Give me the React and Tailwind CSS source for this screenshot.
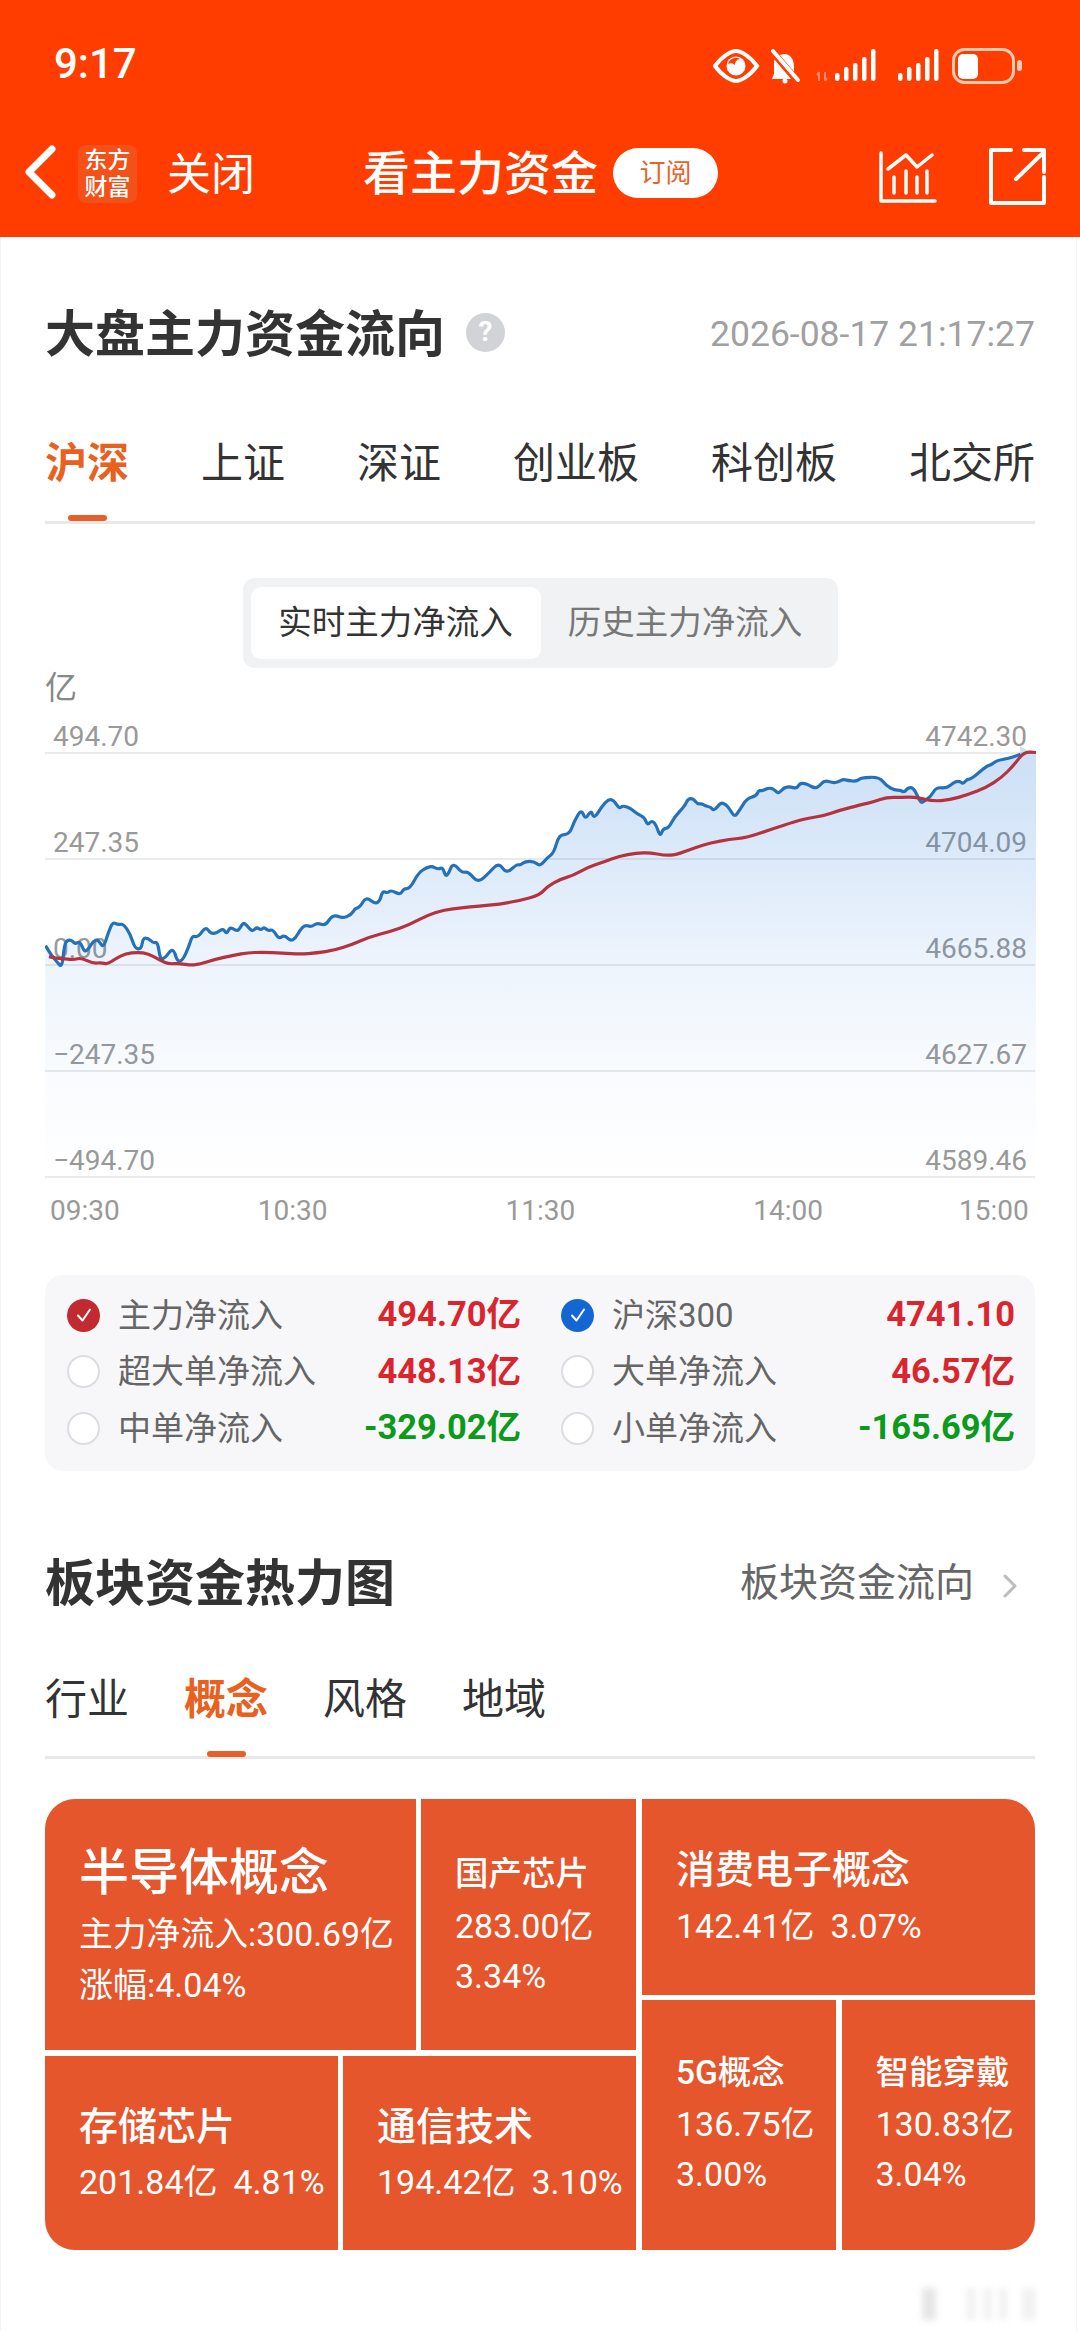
import React from "react";

// traced from the chart, x/y are in px inside the 990x472 plot box
const left = (X, Y) => [X / 2.903 - 45, 660 + Y / 2.703 - 706];
const right = (X, Y) => [540 + X / 2.903 - 45, 660 + Y / 2.703 - 706];

const blueLeft = [[132,772],[150,800],[165,815],[180,832],[187,770],[195,757],[208,757],[218,768],[232,760],[245,790],[258,780],[270,760],[285,755],[300,780],[315,735],[328,708],[342,716],[358,713],[378,740],[392,780],[410,782],[415,752],[430,752],[445,765],[458,762],[465,810],[480,805],[495,785],[505,785],[515,815],[530,812],[548,775],[558,745],[575,750],[597,720],[612,740],[630,738],[648,725],[658,742],[668,720],[690,736],[705,710],[715,715],[732,735],[745,722],[757,730],[767,722],[778,732],[792,728],[810,755],[825,742],[850,765],[880,715],[905,722],[920,710],[945,718],[960,695],[975,690],[995,698],[1020,688],[1030,672],[1045,668],[1062,640],[1090,660],[1103,650],[1110,625],[1125,630],[1135,622],[1162,635],[1172,618],[1190,618],[1215,575],[1240,560],[1255,558],[1272,566],[1285,560],[1292,582],[1300,582],[1315,547],[1340,575],[1360,572],[1388,603],[1420,575],[1448,547],[1470,578],[1500,552],[1510,555],[1525,544],[1550,544]];
const blueRight = [[0,558],[20,535],[40,522],[55,472],[85,472],[100,435],[120,403],[132,432],[148,405],[157,430],[180,395],[200,376],[215,380],[230,402],[240,393],[265,402],[280,415],[303,425],[312,447],[325,433],[338,447],[348,478],[358,455],[373,455],[390,425],[420,395],[430,375],[445,375],[458,390],[470,388],[480,395],[495,397],[505,408],[525,385],[540,390],[552,405],[565,425],[580,405],[600,375],[628,367],[635,352],[645,354],[665,345],[680,350],[692,362],[708,345],[725,342],[745,348],[755,332],[775,335],[795,346],[808,344],[825,325],[850,332],[865,330],[880,322],[895,326],[920,328],[932,318],[985,316],[1005,340],[1030,352],[1045,352],[1058,358],[1068,345],[1085,345],[1105,387],[1115,382],[1135,368],[1150,344],[1180,347],[1205,328],[1220,328],[1228,335],[1240,322],[1252,322],[1295,288],[1310,283],[1325,272],[1360,266],[1395,255]];
const redLeft = [[142,802],[165,806],[190,808],[215,810],[235,805],[270,820],[295,818],[312,822],[335,808],[365,793],[400,790],[430,793],[465,812],[490,822],[520,820],[555,825],[580,822],[620,810],[680,798],[720,791],[760,790],[820,792],[870,795],[920,792],[970,785],[1020,770],[1075,748],[1135,733],[1190,715],[1240,690],[1290,675],[1340,670],[1390,665],[1450,660],[1510,650]];
const redRight = [[0,635],[20,613],[60,592],[95,583],[140,560],[185,546],[230,530],[280,522],[320,521],[360,528],[395,527],[450,507],[495,494],[550,485],[600,480],[680,455],[740,437],[780,427],[820,422],[870,406],[930,392],[970,383],[1005,371],[1050,371],[1090,370],[1140,382],[1190,378],[1240,365],[1295,345],[1340,318],[1375,285],[1405,248],[1440,250]];

// quadratic through midpoints so the traced lines don't look angular
const toPath = (a, b) => {
  const pts = [...a.map(([x, y]) => left(x, y)), ...b.map(([x, y]) => right(x, y))];
  let d = `M${pts[0][0].toFixed(1)} ${pts[0][1].toFixed(1)}`;
  for (let i = 1; i < pts.length - 1; i++) {
    const mx = (pts[i][0] + pts[i + 1][0]) / 2;
    const my = (pts[i][1] + pts[i + 1][1]) / 2;
    d += ` Q${pts[i][0].toFixed(1)} ${pts[i][1].toFixed(1)} ${mx.toFixed(1)} ${my.toFixed(1)}`;
  }
  const last = pts[pts.length - 1];
  return `${d} L${last[0].toFixed(1)} ${last[1].toFixed(1)}`;
};

const bluePath = toPath(blueLeft, blueRight);
const redPath = toPath(redLeft, redRight);
const areaPath = `${bluePath} L975 40 L985 46 L991 47 L991 472 L0 472 Z`;

const axis = [
  ["494.70", "4742.30", "h-[48px]"],
  ["247.35", "4704.09", "h-[106px]"],
  ["0.00", "4665.88", "h-[106px]"],
  ["−247.35", "4627.67", "h-[106px]"],
  ["−494.70", "4589.46", "h-[106px]"],
];

const legend = [
  { label: "主力净流入", value: "494.70亿", tone: "text-[#d9262e]", check: "bg-[#c22a32]" },
  { label: "沪深300", value: "4741.10", tone: "text-[#d9262e]", check: "bg-[#1467d2]" },
  { label: "超大单净流入", value: "448.13亿", tone: "text-[#d9262e]" },
  { label: "大单净流入", value: "46.57亿", tone: "text-[#d9262e]" },
  { label: "中单净流入", value: "-329.02亿", tone: "text-[#0c9a1c]" },
  { label: "小单净流入", value: "-165.69亿", tone: "text-[#0c9a1c]" },
];

const smudges = ["w-[14px] bg-[#e6e6e6]", "ml-[30px] w-[10px] bg-[#f3f3f3]", "ml-[8px] w-[8px] bg-[#f1f1f1]", "ml-[7px] w-[8px] bg-[#f1f1f1]", "ml-[15px] w-[14px] bg-[#f2f2f2]"];

function Tab({ children, active, className = "" }) {
  return (
    <div className={`flex flex-col items-center ${className}`}>
      <span className={`h-[60px] text-[42px] leading-[63px] ${active ? "font-bold text-[#e8611f]" : "text-[#333]"}`}>{children}</span>
      {active && <span className="mt-[23px] h-[6px] w-[39px] rounded-full bg-[#e5602a]" />}
    </div>
  );
}

function Check({ color }) {
  if (!color) return <span className="h-[33px] w-[33px] shrink-0 rounded-full border-2 border-[#dcdde0] bg-white" />;
  return (
    <span className={`flex h-[33px] w-[33px] shrink-0 items-center justify-center rounded-full ${color}`}>
      <svg width="20" height="20" viewBox="0 0 20 20" fill="none" stroke="#fff" strokeWidth="2" strokeLinecap="round" strokeLinejoin="round">
        <path d="M4 10.5l4.5 5L16 4.5" />
      </svg>
    </span>
  );
}

function StatusIcons() {
  return (
    <svg width="310" height="38" viewBox="0 0 310 38" className="mt-[8px] shrink-0">
      {/* eye */}
      <path d="M2 18 C10 7 19 3 23 3 C27 3 36 7 44 18 C36 29 27 33 23 33 C19 33 10 29 2 18 Z" fill="none" stroke="#fff" strokeWidth="4" />
      <circle cx="23" cy="18" r="9.5" fill="#fff" />
      <path d="M15 16 A8 8 0 0 1 27 11 C24 11 22 14 22 17 C20 15 17 15 15 16 Z" fill="#ff3d00" />
      {/* muted bell */}
      <path d="M72 6 C79 7 81 13 81 19 L81 26 L85 31 L59 31 L61 26 L61 14 C61 10 66 6 72 6 Z" fill="#fff" />
      <circle cx="72" cy="33" r="2.5" fill="#fff" />
      <path d="M58 2 L86 35" stroke="#ff3d00" strokeWidth="7" />
      <path d="M60 3 L85 32" stroke="#fff" strokeWidth="4" strokeLinecap="round" />
      {/* data arrows */}
      <path d="M106 24v9M106 24l-2 3M112 33v-9M112 33l2-3" stroke="#fff" strokeOpacity=".4" strokeWidth="2" fill="none" />
      {/* signal */}
      <rect x="122" y="25" width="4.5" height="8" rx="2.2" fill="#fff" />
      <rect x="131" y="19" width="4.5" height="14" rx="2.2" fill="#fff" />
      <rect x="140" y="15" width="4.5" height="18" rx="2.2" fill="#fff" />
      <rect x="149" y="9" width="4.5" height="24" rx="2.2" fill="#fff" />
      <rect x="158" y="1" width="4.5" height="32" rx="2.2" fill="#fff" />
      <rect x="185" y="25" width="4.5" height="8" rx="2.2" fill="#fff" />
      <rect x="194" y="19" width="4.5" height="14" rx="2.2" fill="#fff" />
      <rect x="203" y="15" width="4.5" height="18" rx="2.2" fill="#fff" />
      <rect x="212" y="9" width="4.5" height="24" rx="2.2" fill="#fff" />
      <rect x="221" y="1" width="4.5" height="32" rx="2.2" fill="#fff" />
      {/* battery */}
      <rect x="240.5" y="1.5" width="60" height="33" rx="11" fill="none" stroke="#ffc9b2" strokeWidth="3" />
      <rect x="245" y="6" width="20" height="25" rx="5" fill="#fff" />
      <rect x="304" y="12" width="5" height="11" rx="2.5" fill="#ffc9b2" />
    </svg>
  );
}

function Tile({ title, lines, className = "", titleClass = "" }) {
  return (
    <div className={`bg-[#e5562c] pl-[34px] text-white ${className}`}>
      <div className={titleClass}>{title}</div>
      {lines}
    </div>
  );
}

export default function App() {
  return (
    <div className="flex min-h-[2331px] flex-col bg-white font-['Roboto','Noto_Sans_CJK_SC',sans-serif] text-[#333]">
      <header className="flex h-[237px] flex-col bg-[#ff3d00] text-white">
        <div className="flex h-[126px] items-center justify-between pl-[54px] pr-[57px]">
          <span className="text-[42px] font-medium">9:17</span>
          <StatusIcons />
        </div>
        <div className="flex h-[92px] items-center">
          <svg width="40" height="56" viewBox="0 0 40 56" fill="none" stroke="#fff" strokeWidth="7" strokeLinecap="round" strokeLinejoin="round" className="ml-[20px]">
            <path d="M32 5 L9 28 L32 51" />
          </svg>
          <div className="ml-[18px] mt-[3px] flex h-[58px] w-[59px] flex-col items-center justify-center rounded-[8px] bg-[#f4501a] text-[23px] font-medium leading-[27px]">
            <span>东方</span>
            <span>财富</span>
          </div>
          <span className="ml-[30px] mt-[6px] text-[44px]">关闭</span>
          <span className="ml-[108px] mt-[5px] text-[47px] font-medium">看主力资金</span>
          <span className="ml-[15px] mt-[2px] flex h-[50px] w-[105px] items-center justify-center rounded-full bg-white text-[26px] text-[#e8622c]">订阅</span>
          <svg width="60" height="55" viewBox="0 0 60 55" fill="none" stroke="#fff" strokeWidth="3.5" strokeLinecap="round" strokeLinejoin="round" className="ml-[160px] mt-[11px]">
            <path d="M3 3 V51 H57" />
            <path d="M10 19 L28 5 L39 17 L54 5" />
            <path d="M16 27 V43 M28 21 V43 M39 27 V43 M49 21 V43" />
          </svg>
          <svg width="60" height="60" viewBox="0 0 60 60" fill="none" stroke="#fff" strokeWidth="4" strokeLinecap="round" strokeLinejoin="round" className="ml-[50px] mt-[10px]">
            <path d="M23 3 H3 V56 H56 V30" />
            <path d="M28 32 L56 5 M36 3 H56 V25" />
          </svg>
        </div>
      </header>

      <main className="relative mr-[3px] flex-1 border-x border-[#f2f2f2] pb-[60px] pl-[44px] pr-[41px] pt-[60px]">
        <div className="flex h-[70px] items-center justify-between">
          <div className="flex items-center">
            <h1 className="h-[70px] text-[50px] font-bold leading-[76px]">大盘主力资金流向</h1>
            <span className="ml-[21px] flex h-[39px] w-[39px] items-center justify-center rounded-full bg-[#d2d3d6] text-[28px] font-bold text-white">?</span>
          </div>
          <span className="h-[52px] text-[35.5px] leading-[56px] text-[#a0a0a0]">2026-08-17 21:17:27</span>
        </div>

        <div className="mt-[65px] flex h-[92px] items-start justify-between border-b-[3px] border-[#e8e8ea]">
          <Tab active>沪深</Tab>
          <Tab>上证</Tab>
          <Tab>深证</Tab>
          <Tab>创业板</Tab>
          <Tab>科创板</Tab>
          <Tab>北交所</Tab>
        </div>

        <div className="mx-auto mt-[54px] flex h-[90px] w-[595px] rounded-[12px] bg-[#f1f2f4] py-[9px] pl-[8px] pr-[8px] text-[33.5px]">
          <div className="flex w-[290px] items-center justify-center rounded-[10px] bg-white text-[#333]">实时主力净流入</div>
          <div className="flex flex-1 items-center justify-center text-[#777]">历史主力净流入</div>
        </div>

        <div className="mt-[2px] h-[36px] text-[32px] leading-[36px] text-[#888]">亿</div>
        <div className="relative">
          {axis.map(([l, r, h]) => (
            <div key={l} className={`flex items-end justify-between border-b-2 border-[#e9eaec] px-[8px] text-[28px] leading-[30px] text-[#999] ${h}`}>
              <span>{l}</span>
              <span>{r}</span>
            </div>
          ))}
          <svg viewBox="0 0 991 472" className="absolute left-0 top-0 h-[472px] w-[991px]" fill="none">
            <defs>
              <linearGradient id="area" x1="0" y1="38" x2="0" y2="472" gradientUnits="userSpaceOnUse">
                <stop offset="0" stopColor="#1a73d9" stopOpacity=".23" />
                <stop offset=".27" stopColor="#1a73d9" stopOpacity=".15" />
                <stop offset=".5" stopColor="#1a73d9" stopOpacity=".08" />
                <stop offset=".75" stopColor="#1a73d9" stopOpacity=".03" />
                <stop offset="1" stopColor="#1a73d9" stopOpacity="0" />
              </linearGradient>
            </defs>
            <path d={areaPath} fill="url(#area)" />
            <path d={bluePath} stroke="#2571b9" strokeWidth="3.2" strokeLinejoin="round" />
            <path d={redPath} stroke="#b5323f" strokeWidth="3.2" strokeLinejoin="round" />
          </svg>
        </div>
        <div className="mt-[15px] flex text-[28px] leading-[36px] text-[#999]">
          <span className="ml-[5px]">09:30</span>
          <span className="ml-[138px]">10:30</span>
          <span className="ml-[178px]">11:30</span>
          <span className="ml-[178px]">14:00</span>
          <span className="ml-[136px]">15:00</span>
        </div>

        <div className="mt-[46px] grid h-[196px] auto-rows-[56.5px] grid-cols-2 gap-x-[40px] rounded-[18px] bg-[#f7f7f9] pl-[22px] pr-[20px] pt-[12px]">
          {legend.map((item) => (
            <div key={item.label} className="flex items-center">
              <Check color={item.check} />
              <span className="ml-[18px] text-[33px] text-[#666]">{item.label}</span>
              <span className={`ml-auto text-[34.5px] font-bold ${item.tone}`}>{item.value}</span>
            </div>
          ))}
        </div>

        <div className="mt-[77px] flex h-[70px] items-center justify-between">
          <h2 className="h-[70px] text-[50px] font-bold leading-[73px]">板块资金热力图</h2>
          <div className="flex items-center text-[39px] text-[#666]">
            <span>板块资金流向</span>
            <svg width="16" height="24" viewBox="0 0 16 24" fill="none" stroke="#bcbcbc" strokeWidth="3" strokeLinecap="round" strokeLinejoin="round" className="ml-[28px] mr-[17px] mt-[6px]">
              <path d="M3 2 L13 12 L3 22" />
            </svg>
          </div>
        </div>

        <div className="mt-[50px] flex h-[91px] items-start gap-[55px] border-b-[3px] border-[#e8e8ea]">
          <Tab>行业</Tab>
          <Tab active>概念</Tab>
          <Tab>风格</Tab>
          <Tab>地域</Tab>
        </div>

        <div className="mt-[40px] flex h-[451px] gap-[6px] overflow-hidden rounded-[30px] text-[34px] leading-[50px]">
          <div className="flex w-[591px] flex-col gap-[6px]">
            <div className="flex h-[251px] gap-[5px]">
              <Tile
                className="w-[371px] pt-[44px]"
                titleClass="text-[50px] font-medium leading-[60px] mb-[7px]"
                title="半导体概念"
                lines={<><div className="text-[33.8px]">主力净流入:300.69亿</div><div>涨幅:4.04%</div></>}
              />
              <Tile
                className="flex-1 pt-[50px]"
                titleClass="text-[33.5px] font-medium mb-[2px]"
                title="国产芯片"
                lines={<><div>283.00亿</div><div>3.34%</div></>}
              />
            </div>
            <div className="flex flex-1 gap-[5px]">
              <Tile
                className="w-[293px] pt-[46px]"
                titleClass="text-[39px] font-medium mb-[5px]"
                title="存储芯片"
                lines={<div className="flex gap-[16px]"><span>201.84亿</span><span>4.81%</span></div>}
              />
              <Tile
                className="flex-1 pt-[46px]"
                titleClass="text-[39px] font-medium mb-[5px]"
                title="通信技术"
                lines={<div className="flex gap-[16px]"><span>194.42亿</span><span>3.10%</span></div>}
              />
            </div>
          </div>
          <div className="flex flex-1 flex-col gap-[5px]">
            <Tile
              className="h-[196px] pt-[46px]"
              titleClass="text-[39px] font-medium mb-[6px]"
              title="消费电子概念"
              lines={<div className="flex gap-[16px]"><span>142.41亿</span><span>3.07%</span></div>}
            />
            <div className="flex flex-1 gap-[6px]">
              <Tile
                className="flex-1 pt-[48px]"
                titleClass="text-[33.5px] font-medium mb-[1px]"
                title="5G概念"
                lines={<><div>136.75亿</div><div>3.00%</div></>}
              />
              <Tile
                className="flex-1 pt-[48px]"
                titleClass="text-[33.5px] font-medium mb-[1px]"
                title="智能穿戴"
                lines={<><div>130.83亿</div><div>3.04%</div></>}
              />
            </div>
          </div>
        </div>

        {/* faint watermark in the corner */}
        <div className="absolute bottom-[11px] right-[40px] flex h-[32px] blur-[3px]">
          {smudges.map((s) => (
            <span key={s} className={s} />
          ))}
        </div>
      </main>
    </div>
  );
}
